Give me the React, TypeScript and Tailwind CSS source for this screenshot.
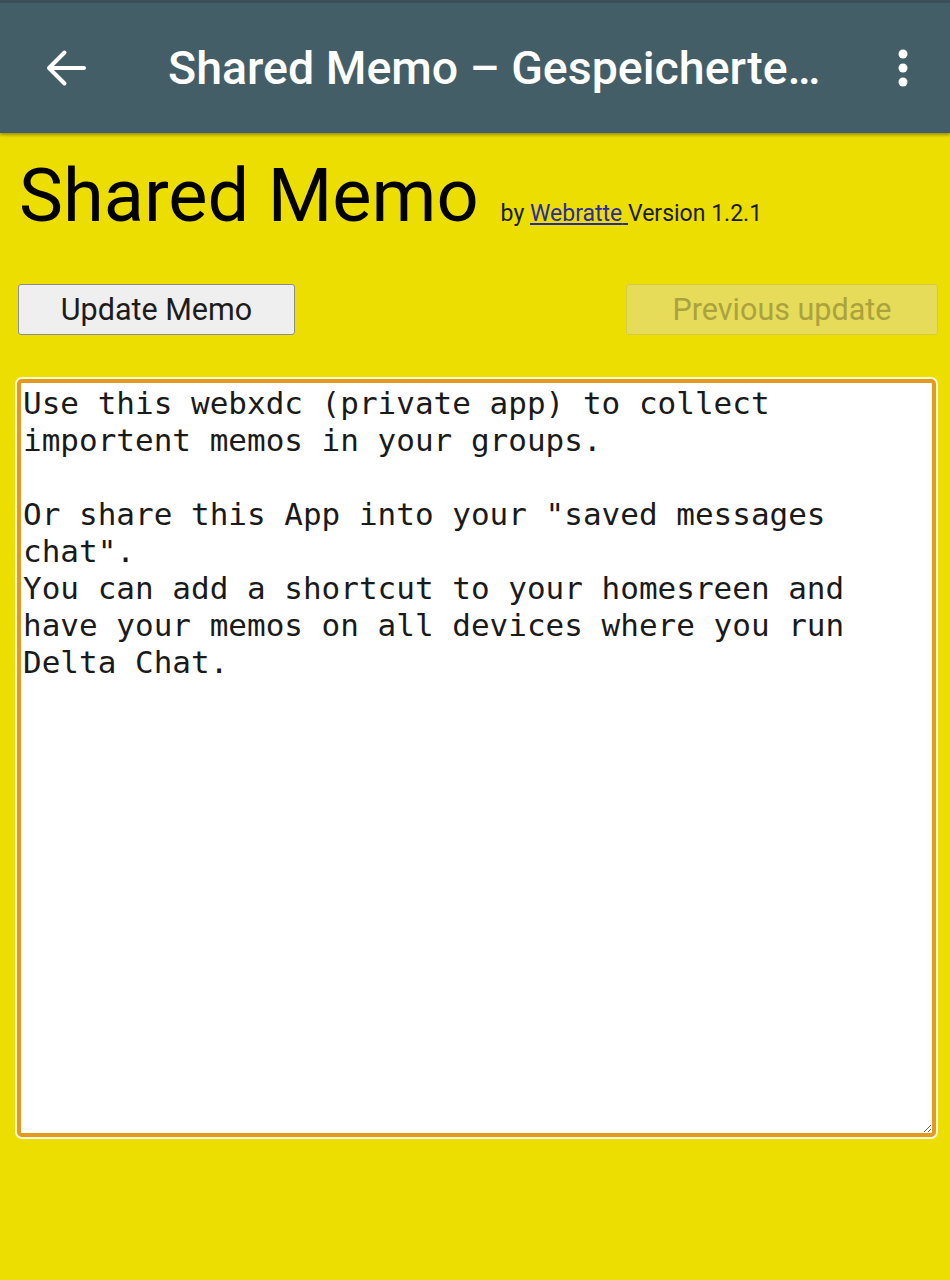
import { useState } from "react";

const initialMemo = `Use this webxdc (private app) to collect
importent memos in your groups.

Or share this App into your "saved messages chat".
You can add a shortcut to your homesreen and have your memos on all devices where you run Delta Chat.`;

const BackArrow = () => (
  <svg width="40" height="40" viewBox="0 0 40 40" fill="none" aria-hidden>
    <path
      d="M38 20H3M3 20L18.5 4.5M3 20L18.5 35.5"
      stroke="white"
      strokeWidth="4"
      strokeLinecap="round"
      strokeLinejoin="round"
    />
  </svg>
);

const MoreDots = () => (
  <svg width="12" height="40" viewBox="0 0 12 40" fill="white" aria-hidden>
    <circle cx="6" cy="6" r="4.5" />
    <circle cx="6" cy="20" r="4.5" />
    <circle cx="6" cy="34" r="4.5" />
  </svg>
);

export default function App() {
  const [memo, setMemo] = useState(initialMemo);

  return (
    <div className="min-h-screen bg-[#ecde00] font-['Roboto',sans-serif]">
      <header className="flex h-[133px] items-center border-t-[3px] border-[#3a4f57] bg-[#445e67] shadow-[0_2px_3px_rgba(0,0,0,0.35)]">
        <div className="ml-[46px] flex h-10 w-10 shrink-0 items-center">
          <BackArrow />
        </div>
        <h1 className="ml-[82px] flex-1 whitespace-nowrap text-[46.5px] font-medium leading-none text-white">
          Shared Memo – Gespeicherte…
        </h1>
        <div className="mr-[41px] flex shrink-0 items-center">
          <MoreDots />
        </div>
      </header>

      <main className="px-[18px]">
        <div className="mt-[26px] flex items-baseline">
          <h2 className="ml-[1px] text-[74px] leading-none text-black">Shared Memo</h2>
          <span className="ml-[22px] text-[23px] text-[#1a1a1a]">
            by{" "}
            <a href="#" className="text-[#2a2aa8] underline">
              Webratte{" "}
            </a>
            Version 1.2.1
          </span>
        </div>

        <div className="mt-[51px] flex items-center justify-between">
          <button className="h-[51px] w-[277px] rounded-[3px] border border-[#8d8d8d] bg-[#efefef] text-[30.5px] text-[#1c1c1c]">
            Update Memo
          </button>
          <button
            disabled
            className="mr-[-6px] h-[51px] w-[312px] rounded-[3px] border border-[#d8cc3c] bg-[#e6dc5a] text-[30.5px] text-[#aaa23e]"
          >
            Previous update
          </button>
        </div>

        <textarea
          value={memo}
          onChange={(e) => setMemo(e.target.value)}
          className="mt-[44px] ml-[-1px] block h-[758px] w-[919px] rounded-[5px] border-[4px] border-[#e39a1e] bg-white p-[2px] font-['DejaVu_Sans_Mono',monospace] text-[31px] leading-[37px] text-[#1a1a1a] shadow-[0_0_0_2px_#fdf8d8] outline-none"
        />
      </main>
    </div>
  );
}
